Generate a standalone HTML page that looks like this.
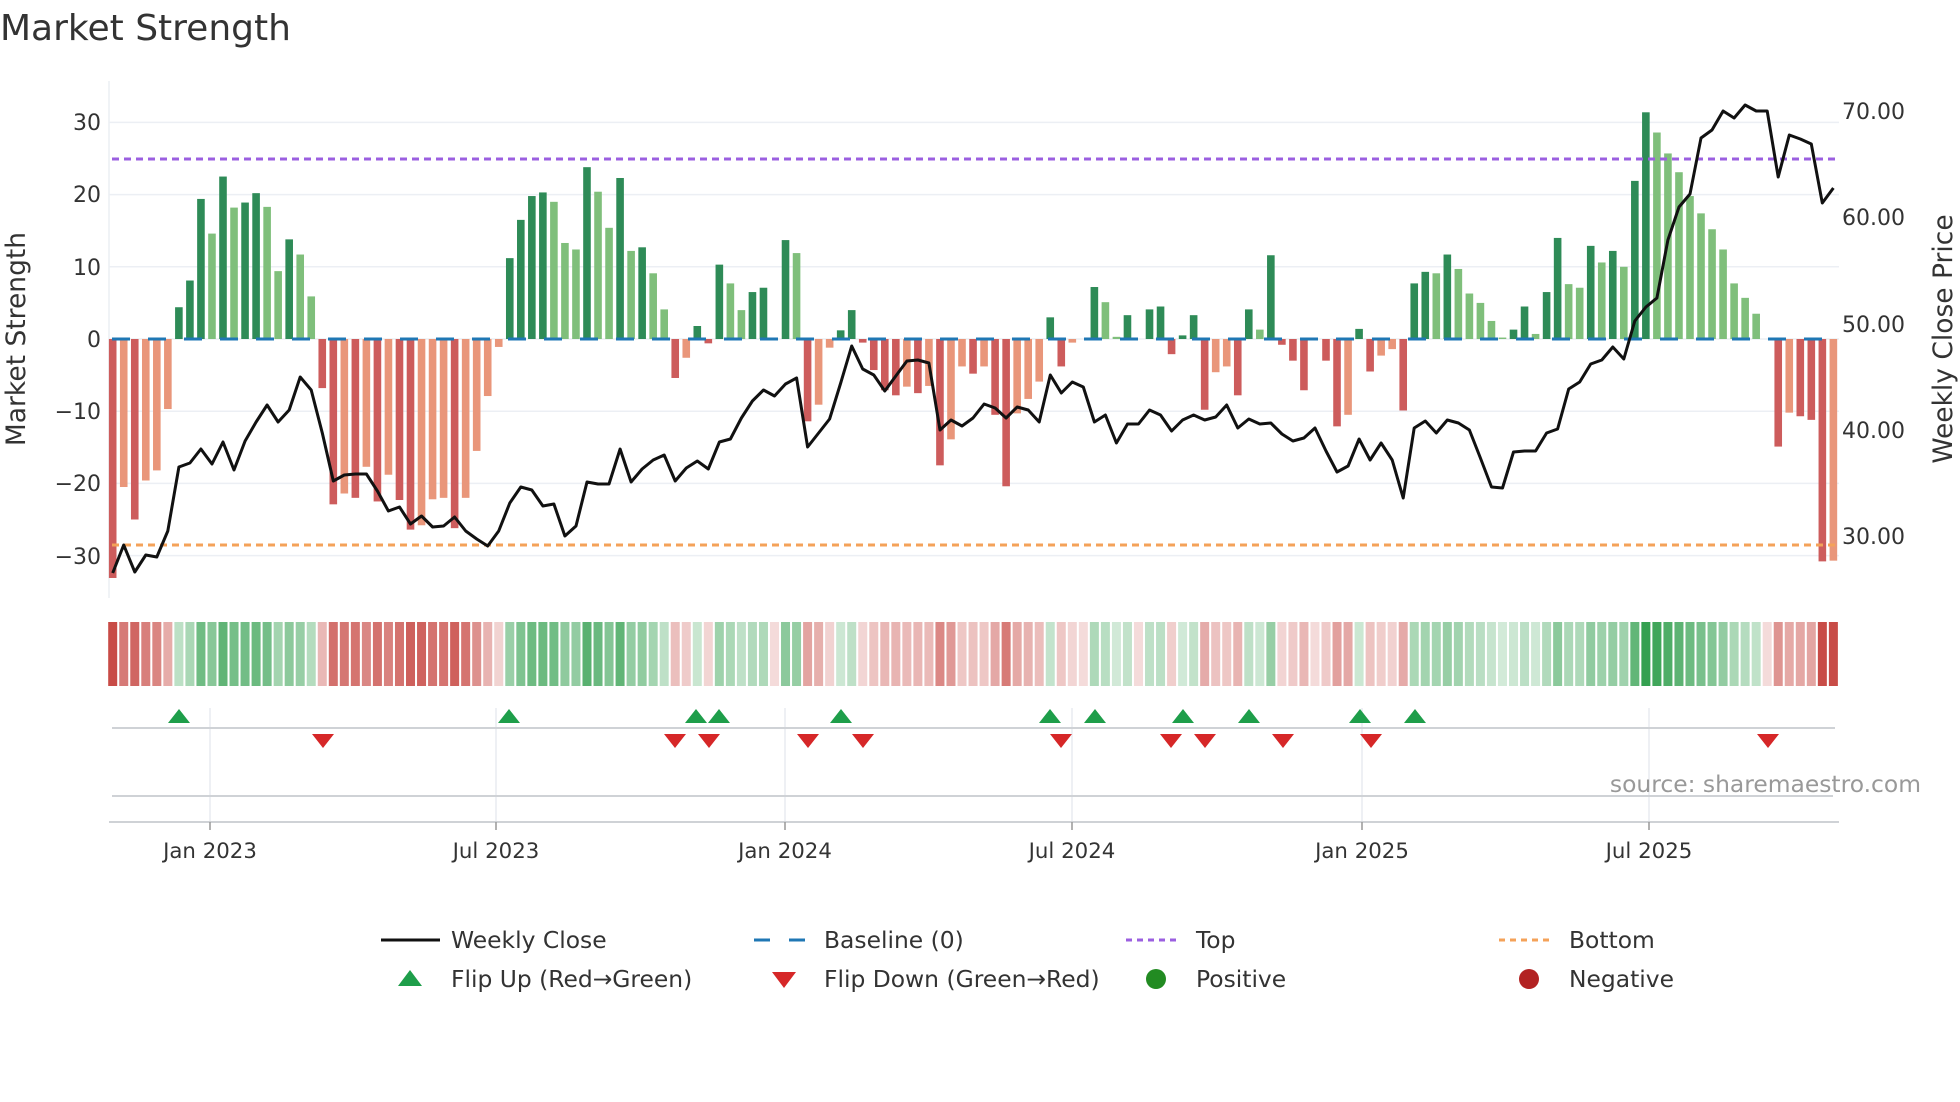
<!DOCTYPE html>
<html><head><meta charset="utf-8"><style>
html,body{margin:0;padding:0;background:#fff;width:1960px;height:1102px;overflow:hidden}
svg{display:block}
text{font-family:"DejaVu Sans","Liberation Sans",sans-serif;fill:#333}
</style></head><body>
<svg id="s" width="1960" height="1102" viewBox="0 0 1960 1102" xmlns="http://www.w3.org/2000/svg">
<text x="0" y="40" font-size="36">Market Strength</text>
<g id="grid" stroke="#eceff4" stroke-width="1.5"></g>
<line x1="109" y1="81" x2="109" y2="598" stroke="#eceff4" stroke-width="1.5"/>
<g id="bars"></g>
<line x1="112" y1="159" x2="1839" y2="159" stroke="#9b5fe0" stroke-width="3" stroke-dasharray="7 5"/>
<line x1="112" y1="545" x2="1839" y2="545" stroke="#f4a259" stroke-width="3" stroke-dasharray="7 5"/>
<line x1="112" y1="339" x2="1839" y2="339" stroke="#1f77b4" stroke-width="3" stroke-dasharray="18 18"/>
<polyline id="price" fill="none" stroke="#111" stroke-width="3" stroke-linejoin="round"/>
<g font-size="22" text-anchor="end">
<text x="101" y="130">30</text><text x="101" y="202">20</text><text x="101" y="275">10</text><text x="101" y="347">0</text>
<text x="101" y="419">−10</text><text x="101" y="491">−20</text><text x="101" y="564">−30</text>
</g>
<g font-size="22">
<text x="1842" y="119">70.00</text><text x="1842" y="225">60.00</text><text x="1842" y="332">50.00</text>
<text x="1842" y="438">40.00</text><text x="1842" y="544">30.00</text>
</g>
<text transform="translate(25,339) rotate(-90)" font-size="26.5" text-anchor="middle">Market Strength</text>
<text transform="translate(1952,339) rotate(-90)" font-size="26.5" text-anchor="middle">Weekly Close Price</text>
<g id="heat"></g>
<g stroke="#e8ebf0" stroke-width="1.5">
<line x1="210" y1="708" x2="210" y2="822"/><line x1="496" y1="708" x2="496" y2="822"/><line x1="785" y1="708" x2="785" y2="822"/>
<line x1="1072" y1="708" x2="1072" y2="822"/><line x1="1362" y1="708" x2="1362" y2="822"/><line x1="1649" y1="708" x2="1649" y2="822"/>
</g>
<line x1="112" y1="728" x2="1835" y2="728" stroke="#cfd2d6" stroke-width="2"/>
<line x1="112" y1="796" x2="1833" y2="796" stroke="#cfd2d6" stroke-width="2"/>
<line x1="109" y1="822" x2="1839" y2="822" stroke="#cfd2d6" stroke-width="2"/>
<g stroke="#999" stroke-width="1.5">
<line x1="210" y1="822" x2="210" y2="830"/><line x1="496" y1="822" x2="496" y2="830"/><line x1="785" y1="822" x2="785" y2="830"/>
<line x1="1072" y1="822" x2="1072" y2="830"/><line x1="1362" y1="822" x2="1362" y2="830"/><line x1="1649" y1="822" x2="1649" y2="830"/>
</g>
<g id="flips"></g>
<text x="1921" y="792" font-size="23.4" text-anchor="end" style="fill:#999">source: sharemaestro.com</text>
<g font-size="21.3" text-anchor="middle">
<text x="210" y="858">Jan 2023</text><text x="496" y="858">Jul 2023</text><text x="785" y="858">Jan 2024</text>
<text x="1072" y="858">Jul 2024</text><text x="1362" y="858">Jan 2025</text><text x="1649" y="858">Jul 2025</text>
</g>
<g font-size="23.4">
<line x1="381" y1="940" x2="440" y2="940" stroke="#111" stroke-width="3"/>
<text x="451" y="948">Weekly Close</text>
<line x1="754" y1="940" x2="806" y2="940" stroke="#1f77b4" stroke-width="3" stroke-dasharray="16 19"/>
<text x="824" y="948">Baseline (0)</text>
<line x1="1126" y1="940" x2="1181" y2="940" stroke="#9b5fe0" stroke-width="3" stroke-dasharray="6 5"/>
<text x="1196" y="948">Top</text>
<line x1="1499" y1="940" x2="1554" y2="940" stroke="#f4a259" stroke-width="3" stroke-dasharray="6 5"/>
<text x="1569" y="948">Bottom</text>
<polygon points="398,986 422,986 410,970" fill="#1e9e4a"/>
<text x="451" y="987">Flip Up (Red→Green)</text>
<polygon points="772,972 796,972 784,988" fill="#d62728"/>
<text x="824" y="987">Flip Down (Green→Red)</text>
<circle cx="1156" cy="979" r="10" fill="#228b22"/>
<text x="1196" y="987">Positive</text>
<circle cx="1529" cy="979" r="10" fill="#b22222"/>
<text x="1569" y="987">Negative</text>
</g>
</svg>
<script>
(function(){
var NS="http://www.w3.org/2000/svg";
function el(t,a,p){var e=document.createElementNS(NS,t);for(var k in a)e.setAttribute(k,a[k]);p.appendChild(e);return e;}
var V=[-33.1,-20.5,-25,-19.6,-18.2,-9.7,4.4,8.1,19.4,14.6,22.5,18.2,18.9,20.2,18.3,9.4,13.8,11.7,5.9,-6.8,-22.9,-21.4,-22,-17.7,-22.5,-18.8,-22.3,-26.4,-25.8,-22.2,-22,-26.2,-22,-15.5,-7.9,-1.1,11.2,16.5,19.8,20.3,19.0,13.3,12.4,23.8,20.4,15.4,22.3,12.2,12.7,9.1,4.1,-5.4,-2.6,1.8,-0.6,10.3,7.7,4.0,6.5,7.1,0,13.7,11.9,-11.4,-9.1,-1.2,1.2,4.0,-0.5,-4.3,-7.1,-7.8,-6.6,-7.5,-6.5,-17.5,-13.9,-3.8,-4.8,-3.8,-10.5,-20.4,-10.3,-8.3,-5.9,3.0,-3.8,-0.5,0,7.2,5.1,0.3,3.3,0,4.1,4.5,-2.1,0.5,3.3,-9.8,-4.6,-3.8,-7.8,4.1,1.3,11.6,-0.8,-3,-7.1,0,-3,-12.1,-10.5,1.4,-4.5,-2.3,-1.4,-9.9,7.7,9.3,9.1,11.7,9.7,6.3,5.0,2.5,0.2,1.3,4.5,0.7,6.5,14.0,7.6,7.1,12.9,10.6,12.2,10.0,21.9,31.4,28.6,25.7,23.1,19.8,17.4,15.2,12.4,7.7,5.7,3.5,0,-14.9,-10.2,-10.7,-11.2,-30.8,-30.7];
var T="RSRSSSDDDLDLDDLLDLLRRSRSRSRRSSSRSSSSDDDDLLLDLLDLDLLRSDRDLLDDZDLRSSDDRRRRSRSRSSRSRRSSSDRSZDLLDZDDRDDRSSRDLDRRRZRRSDRSSRDDLDLLLLLDDLDDLLDLDLDDLLLLLLLLLLZRSRRRS";
var P=[573,545,572,555,557,531,467,463,449,464,442,470,441,422,405,422,410,377,390,433,481,475,474,474,491,511,507,524,516,527,526,517,531,539,546,531,503,487,490,506,504,536,526,482,484,484,449,482,469,460,455,481,468,461,469,442,439,418,401,390,396,384,378,447,433,419,383,346,369,375,391,376,361,360,363,430,420,426,418,404,408,418,407,410,422,375,393,382,387,422,415,443,424,424,410,415,431,420,415,420,417,405,428,419,424,423,434,441,438,428,451,472,466,439,460,443,460,498,428,421,433,420,423,430,458,487,488,452,451,451,433,429,389,382,364,360,347,359,321,307,298,240,207,194,138,130,111,118,105,111,111,177,135,139,144,203,188];
var x0=112.7,dx=11.03,z=339,u=7.22;
var C={D:"#2e8b57",L:"#7fbf7b",R:"#cd5c5c",S:"#e9967a"};
var g=document.getElementById("grid");
[30,20,10,0,-10,-20,-30].forEach(function(v){el("line",{x1:109,x2:1839,y1:z-v*u,y2:z-v*u},g);});
var b=document.getElementById("bars"),h=document.getElementById("heat"),pts=[];
for(var i=0;i<V.length;i++){
 var x=x0+i*dx,v=V[i],t=T[i]||"Z";
 if(t!="Z"&&Math.abs(v)>0){var y1=v>0?z-v*u:z,hh=Math.abs(v)*u;el("rect",{x:x-3.8,y:y1,width:7.6,height:Math.max(hh,1),fill:C[t]},b);}
 var a=Math.min(1,0.22+0.78*Math.abs(v)/31);
 var col=v>0?"rgba(52,160,80,"+a+")":(v<0?"rgba(200,75,70,"+a+")":"rgba(200,75,70,0.2)");
 el("rect",{x:x-4.5,y:622,width:9,height:64,fill:col},h);
 pts.push(x.toFixed(1)+","+(P[i]||P[P.length-1]));
}
document.getElementById("price").setAttribute("points",pts.join(" "));
var f=document.getElementById("flips");
[179,509,696,719,841,1050,1095,1183,1249,1360,1415].forEach(function(x){el("polygon",{points:(x-11)+",723 "+(x+11)+",723 "+x+",709",fill:"#1e9e4a"},f);});
[323,675,709,808,863,1061,1171,1205,1283,1371,1768].forEach(function(x){el("polygon",{points:(x-11)+",734 "+(x+11)+",734 "+x+",748",fill:"#d62728"},f);});
})();
</script>
</body></html>
